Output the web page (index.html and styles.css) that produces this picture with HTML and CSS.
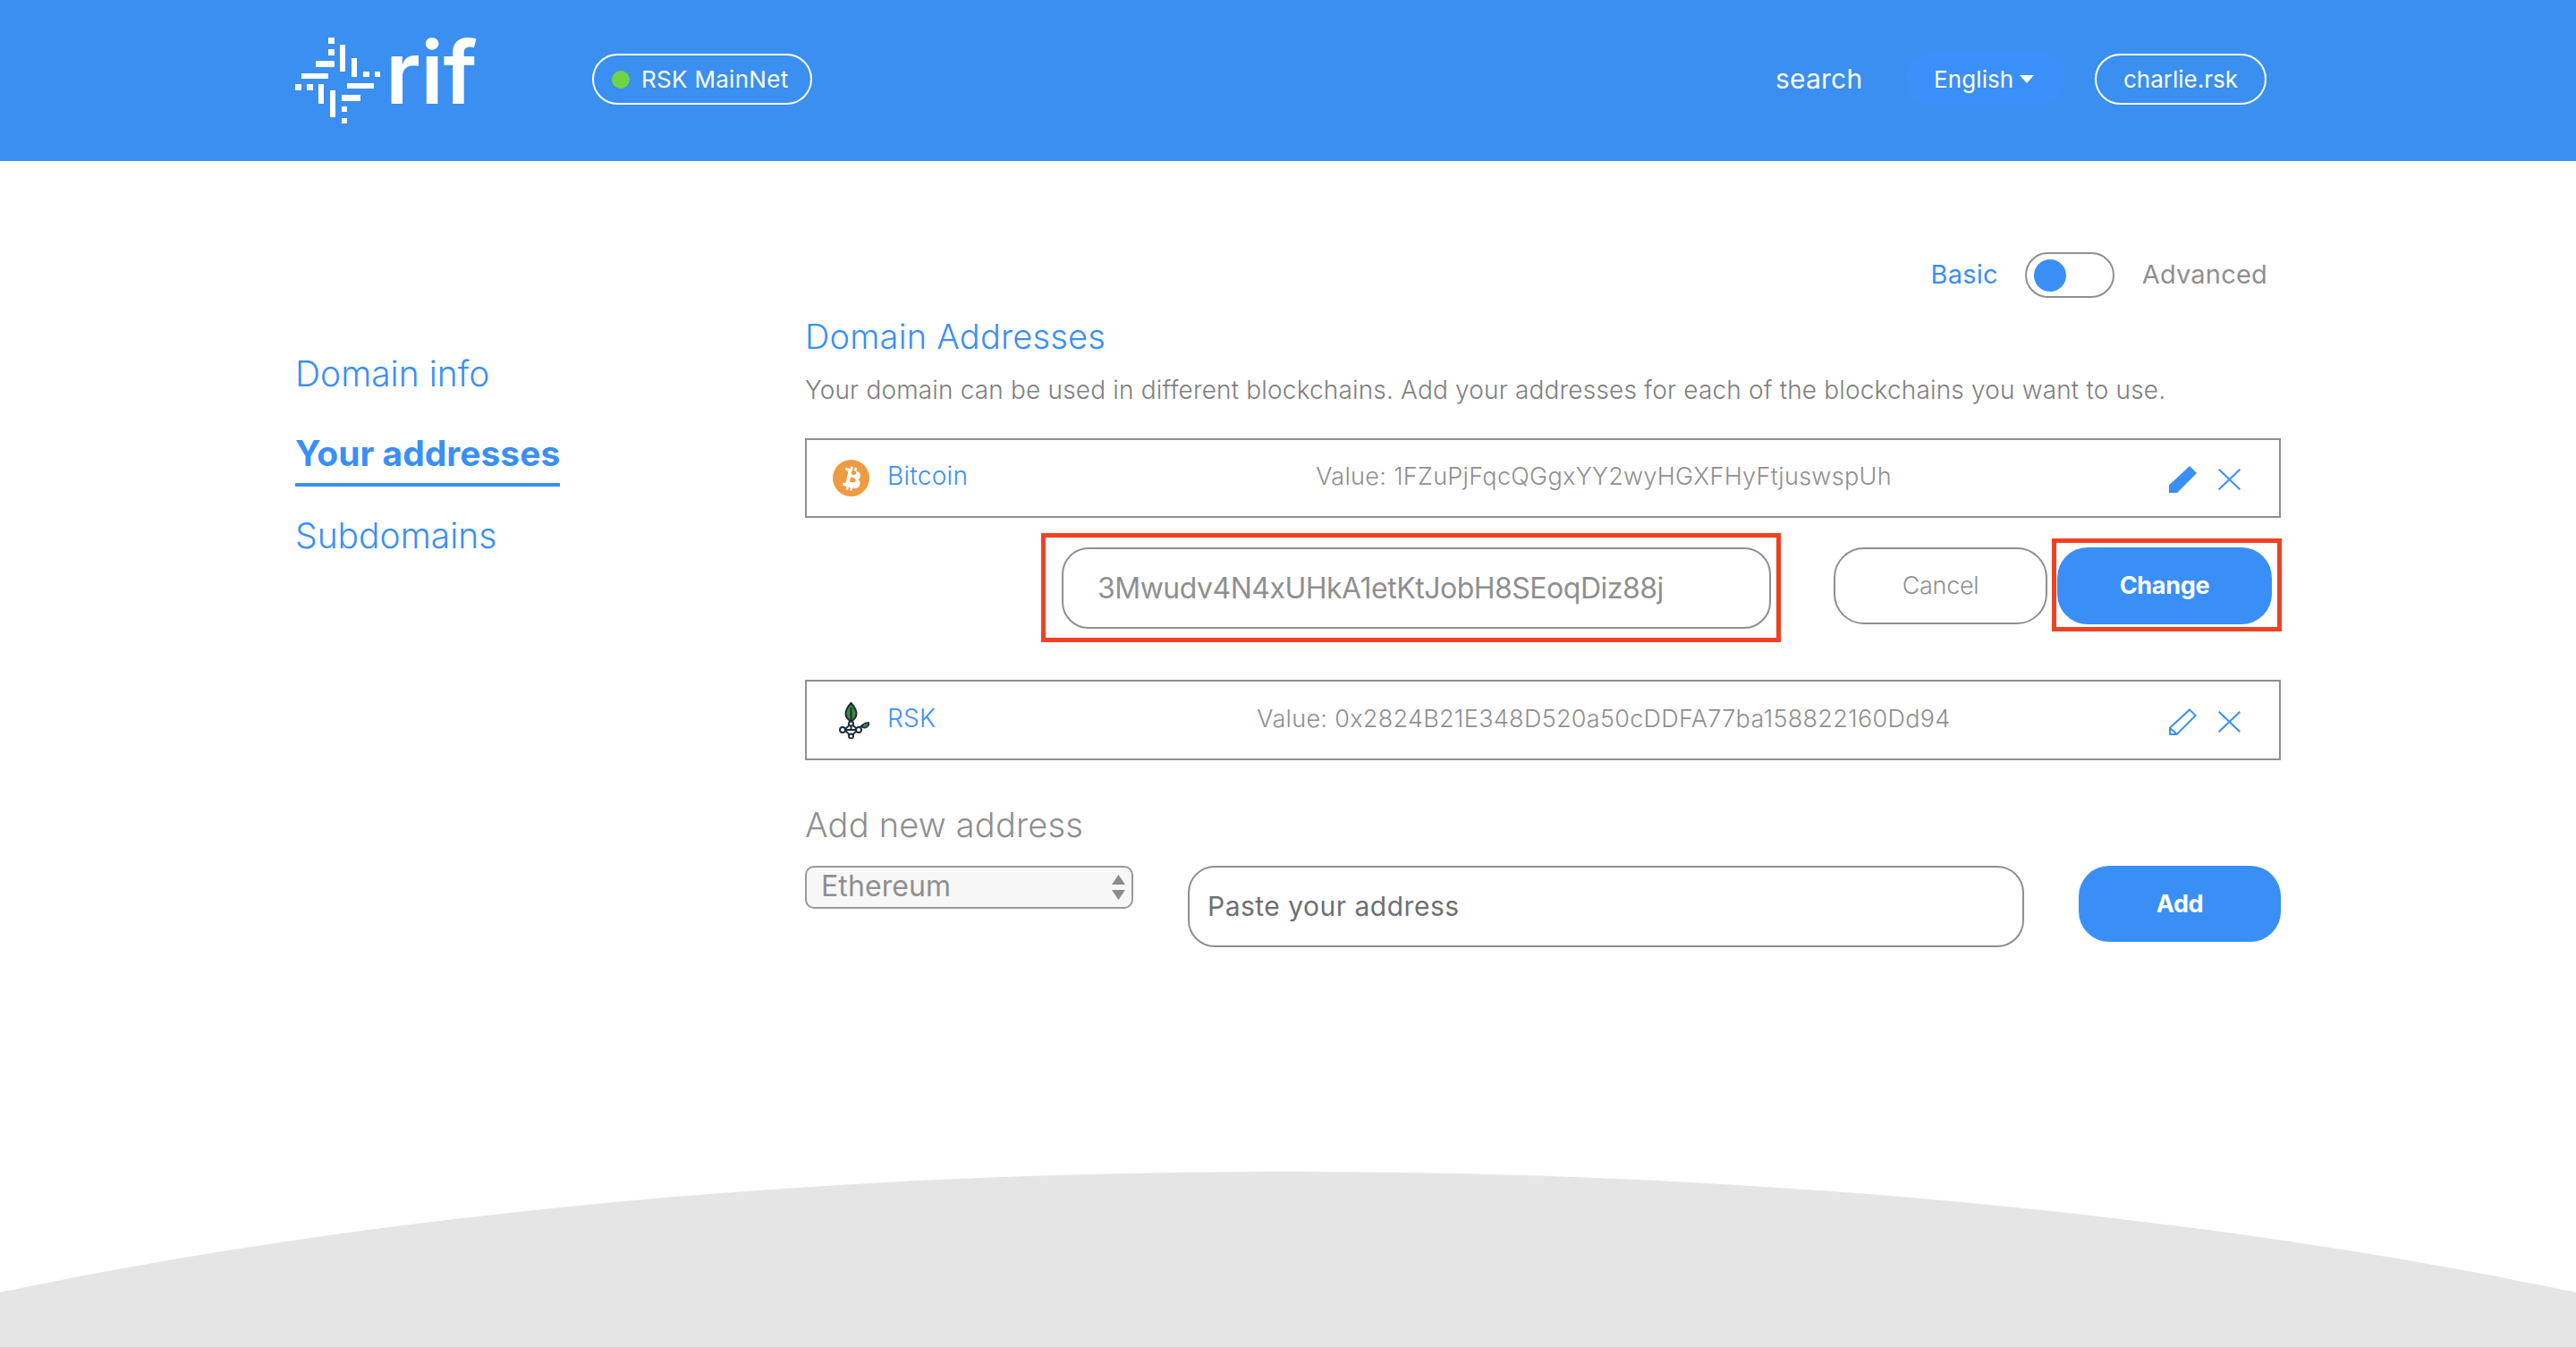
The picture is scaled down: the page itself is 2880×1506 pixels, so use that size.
FILE: index.html
```html
<!DOCTYPE html>
<html lang="en">
<head>
<meta charset="utf-8">
<title>RIF Name Service</title>
<link rel="stylesheet" href="styles.css">
</head>
<body>
<header class="topbar">
  <div class="brand">
    <svg class="logo" viewBox="330 15 210 125" width="210" height="125" aria-label="rif">
      <g fill="#fff">
        <rect x="367" y="42" width="7" height="7"/><rect x="367" y="55" width="7" height="7"/>
        <rect x="380" y="50" width="6" height="30"/><rect x="353" y="68" width="21" height="7"/>
        <rect x="393" y="65" width="6" height="21"/><rect x="406" y="80" width="7" height="6"/>
        <rect x="419" y="80" width="6" height="6"/><rect x="337" y="82" width="30" height="6"/>
        <rect x="330" y="94" width="7" height="7"/><rect x="343" y="94" width="7" height="7"/>
        <rect x="356" y="94" width="6" height="22"/><rect x="388" y="93" width="30" height="6"/>
        <rect x="369" y="101" width="6" height="30"/><rect x="382" y="106" width="21" height="7"/>
        <rect x="382" y="119" width="6" height="6"/><rect x="382" y="132" width="6" height="6"/>
        <text class="logo-word" x="431" y="116">rif</text>
      </g>
    </svg>
    <div class="pill network"><span class="dot"></span>RSK MainNet</div>
  </div>
  <nav class="topnav">
    <span class="search">search</span>
    <span class="lang">English<span class="caret"></span></span>
    <span class="pill user">charlie.rsk</span>
  </nav>
</header>

<div class="page">
  <aside class="side">
    <a class="side-link">Domain info</a>
    <a class="side-link active">Your addresses</a>
    <a class="side-link">Subdomains</a>
  </aside>
  <main class="content">
    <div class="mode">
      <span class="mode-on">Basic</span>
      <span class="switch"><span class="knob"></span></span>
      <span class="mode-off">Advanced</span>
    </div>
    <h1 class="title">Domain Addresses</h1>
    <p class="desc">Your domain can be used in different blockchains. Add your addresses for each of the blockchains you want to use.</p>

    <div class="row row-btc">
      <div class="row-name">
        <svg class="coin" viewBox="0 0 41 41" width="41" height="41">
          <circle cx="20.5" cy="20.5" r="20.5" fill="#ef9b41"/>
          <path fill="#fff" fill-rule="evenodd" d="M19 7.5l2.6.6-.8 3.2c.7.1 1.3.3 2 .5l.8-3.2 2.6.6-.8 3.3c3.2 1.1 5.5 2.8 5 5.9-.3 2.2-1.5 3.3-3.1 3.7 2.3 1.2 3.4 3 2.3 6.1-1.4 3.9-4.6 4.2-8.9 3.4l-.8 3.3-2.6-.6.8-3.3-2-.5-.8 3.3-2.6-.6.8-3.3-5.2-1.3 1.3-3c1.6.4 2.6.8 3-.2l2.9-11.5c.1-.9-.3-1.4-1.400-1.700l-2.300-.600.700-2.800 5.200 1.300zm-.5 11.700l-1.300 5.200c1.600.400 6.600 2 7.300-1 .800-3.100-4.400-3.800-6-4.200zm1.900-7.600l-1.200 4.700c1.300.300 5.400 1.700 6.100-1 .700-2.800-3.500-3.400-4.900-3.700z" transform="translate(3 0) scale(.92 1)"/>
        </svg>
        <span class="coin-name">Bitcoin</span>
      </div>
      <div class="row-value">Value: 1FZuPjFqcQGgxYY2wyHGXFHyFtjuswspUh</div>
      <div class="row-actions">
        <svg class="edit" viewBox="0 0 31 30" width="31" height="30"><path fill="#3a8ff7" d="M23 0l8 8L9 30H0v-8.500z"/></svg>
        <svg class="close" viewBox="0 0 25 24" width="25" height="24"><path fill="none" stroke="#3a8ff7" stroke-width="2" d="M.7.7l23.600 22.600M24.300.7L.7 23.300"/></svg>
      </div>
    </div>

    <div class="edit-line">
      <div class="mark mark-input"><div class="field field-edit">3Mwudv4N4xUHkA1etKtJobH8SEoqDiz88j</div></div>
      <button class="btn btn-ghost">Cancel</button>
      <div class="mark mark-btn"><button class="btn btn-primary">Change</button></div>
    </div>

    <div class="row row-rsk">
      <div class="row-name">
        <svg class="coin" viewBox="0 0 41 41" width="41" height="41">
          <path fill="#3f8a3a" stroke="#1d2b3a" stroke-width="2" d="M20.500 1c4 4.500 6 8.500 6 12s-2.500 6.500-6 9c-3.500-2.500-6-5.500-6-9s2-7.500 6-12z"/>
          <path fill="none" stroke="#1d2b3a" stroke-width="2" d="M20.500 6v26M20.500 22v3M13 31l7.500-7 7.500 7-7.500 7zM9 31h23M28 30c2-2 5-3 6-5"/>
          <circle cx="20.500" cy="24" r="2.500" fill="#fff" stroke="#1d2b3a" stroke-width="2"/>
          <circle cx="11" cy="31" r="3" fill="#fff" stroke="#1d2b3a" stroke-width="2"/>
          <circle cx="29" cy="31" r="3" fill="#fff" stroke="#1d2b3a" stroke-width="2"/>
          <circle cx="20.500" cy="38" r="2.500" fill="#fff" stroke="#1d2b3a" stroke-width="2"/>
          <path fill="#3f8a3a" stroke="#1d2b3a" stroke-width="1.500" d="M33 28c0-3 3-5 7.500-5 0 4-3 7-7.500 5z"/>
        </svg>
        <span class="coin-name">RSK</span>
      </div>
      <div class="row-value">Value: 0x2824B21E348D520a50cDDFA77ba158822160Dd94</div>
      <div class="row-actions">
        <svg class="edit" viewBox="0 0 31 30" width="31" height="30"><path fill="none" stroke="#3a8ff7" stroke-width="2" d="M23 1.400L29.600 8 8.600 29H1v-7.200zM1 22l8 7"/></svg>
        <svg class="close" viewBox="0 0 25 24" width="25" height="24"><path fill="none" stroke="#3a8ff7" stroke-width="2" d="M.7.7l23.600 22.600M24.300.7L.7 23.300"/></svg>
      </div>
    </div>

    <h2 class="title title-add">Add new address</h2>
    <div class="add-line">
      <div class="select"><span class="select-text">Ethereum</span>
        <svg class="select-arrows" viewBox="0 0 15 28" width="15" height="28"><path fill="#8c8c8c" d="M7.500 0L15 11H0zM0 17h15L7.500 28z"/></svg>
      </div>
      <div class="field field-add">Paste your address</div>
      <button class="btn btn-primary btn-add">Add</button>
    </div>
  </main>
</div>

<footer class="foot">
  <svg class="foot-arc" viewBox="0 0 2880 196" width="2880" height="196"><ellipse cx="1440" cy="675" rx="2400" ry="675" fill="#e5e5e5"/></svg>
</footer>
</body>
</html>
```

FILE: styles.css
```css
* { box-sizing: border-box; }
html, body { margin: 0; height: 100%; }
body {
  width: 2880px;
  height: 1506px;
  overflow: hidden;
  position: relative;
  background: #fff;
  font-family: Inter, "Liberation Sans", sans-serif;
  color: #8f8f8f;
  display: flex;
  flex-direction: column;
}

.topbar {
  height: 180px;
  flex: none;
  background: #3a8ff0;
  padding: 0 346px 0 330px;
  display: flex;
  align-items: flex-start;
  justify-content: space-between;
  color: #fff;
}
.brand { display: flex; align-items: flex-start; padding-top: 15px; }
.logo { display: block; }
.logo-word { font: 600 98px Inter, sans-serif; letter-spacing: -0.500px; }
.pill {
  height: 57px;
  border: 2px solid #fff;
  border-radius: 29px;
  display: flex;
  align-items: center;
  font-size: 26px;
  font-weight: 400;
}
.network {
  margin: 45px 0 0 122px;
  width: 246px;
  padding-left: 20px;
  letter-spacing: 0.300px;
}
.dot {
  width: 20px;
  height: 20px;
  border-radius: 50%;
  background: #70d443;
  margin-right: 13px;
}
.topnav { display: flex; align-items: center; padding-top: 58px; font-weight: 300; }
.search { font-size: 30px; width: 145px; letter-spacing: 0.200px; font-weight: 400; }
.lang {
  width: 180px;
  height: 60px;
  border-radius: 30px;
  background: #3a8ff8;
  font-size: 26px;
  font-weight: 400;
  display: flex;
  align-items: center;
  padding-left: 32px;
  margin-right: 32px;
  letter-spacing: 0.100px;
}
.caret {
  width: 0;
  height: 0;
  margin-left: 7px;
  border-left: 8px solid transparent;
  border-right: 8px solid transparent;
  border-top: 9px solid #fff;
}
.user {
  width: 192px;
  justify-content: center;
  letter-spacing: 0;
}

.page {
  flex: 1;
  display: flex;
  padding-left: 330px;
}
.side {
  width: 570px;
  flex: none;
  padding-top: 214px;
  display: flex;
  flex-direction: column;
  align-items: flex-start;
  color: #3a8ff7;
}
.side-link {
  font-size: 39px;
  font-weight: 300;
  line-height: 47px;
  margin-bottom: 42px;
}
.side-link.active {
  font-weight: 700;
  border-bottom: 4px solid #3a8ff7;
  padding-bottom: 10px;
  margin-bottom: 31px;
}

.content { width: 1650px; flex: none; }
.mode {
  display: flex;
  align-items: center;
  justify-content: flex-end;
  padding: 99px 15px 0 0;
  font-size: 29px;
  letter-spacing: 0.200px;
  height: 153px;
}
.mode-on { color: #3a8ff7; }
.switch {
  width: 100px;
  height: 51px;
  margin: 3px 31px 0 30px;
  border: 2px solid #8f8f8f;
  border-radius: 26px;
  padding: 6px 0 0 8px;
}
.knob { display: block; width: 36px; height: 36px; border-radius: 50%; background: #3a8ff7; }
.title {
  margin: 20px 0 0;
  font-size: 38px;
  line-height: 46px;
  font-weight: 300;
  color: #3a8ff7;
  letter-spacing: 0.200px;
}
.desc {
  margin: 20px 0 0;
  font-size: 28px;
  line-height: 34px;
  font-weight: 300;
  color: #7f7f7f;
  letter-spacing: 0.170px;
}

.row {
  height: 90px;
  border: 2px solid #8f8f8f;
  display: flex;
  align-items: center;
  font-size: 27px;
  font-weight: 300;
  letter-spacing: 0.300px;
}
.row-btc { margin-top: 37px; height: 89px; }
.row-rsk { margin-top: 42px; }
.row-name { width: 259px; flex: none; display: flex; align-items: center; padding-left: 29px; }
.coin { flex: none; margin-right: 20px; }
.coin-name { color: #3a8ff7; font-size: 28px; padding-bottom: 5px; }
.row-value { flex: 1; text-align: center; padding-bottom: 4px; }
.row-actions {
  width: 123px;
  flex: none;
  display: flex;
  align-items: center;
  gap: 24px;
  padding-top: 3px;
}
.edit, .close { display: block; flex: none; }

.edit-line {
  margin-top: 17px;
  padding-left: 264px;
  display: flex;
  align-items: flex-start;
  width: 1651px;
}
.mark { border: 5px solid #ef4123; }
.mark-input { width: 827px; height: 122px; padding: 11px 6px 0 18px; margin-right: 59px; }
.mark-btn { width: 257px; height: 104px; padding: 5px 0 0 1px; margin: 6px 0 0 5px; }
.field { border: 2px solid #8f8f8f; display: flex; align-items: center; }
.field-edit {
  height: 91px;
  border-radius: 30px;
  padding: 0 0 1px 38px;
  font-size: 32px;
  font-weight: 400;
  letter-spacing: -0.500px;
}
.btn {
  display: block;
  height: 86px;
  border-radius: 34px;
  font-family: inherit;
  font-size: 27px;
  padding: 0 0 1px;
  cursor: pointer;
}
.btn-ghost {
  width: 239px;
  margin-top: 16px;
  background: #fff;
  border: 2px solid #8f8f8f;
  color: #8f8f8f;
  font-weight: 300;
  letter-spacing: -0.300px;
}
.btn-primary {
  width: 240px;
  background: #3a8ff7;
  border: 0;
  color: #fff;
  font-weight: 700;
  letter-spacing: -0.300px;
}

.title-add { margin-top: 49px; color: #8f8f8f; }
.add-line { display: flex; align-items: flex-start; margin-top: 23px; }
.select {
  width: 367px;
  height: 48px;
  border: 2px solid #999;
  border-radius: 10px;
  background: #f7f7f7;
  font-size: 32px;
  font-weight: 400;
  padding-left: 16px;
  margin-right: 61px;
  display: flex;
  align-items: center;
  justify-content: space-between;
  padding-right: 7px;
  letter-spacing: 0.100px;
}
.select-text { padding-bottom: 3px; }
.select-arrows { display: block; flex: none; }
.field-add {
  width: 935px;
  height: 91px;
  border-radius: 30px;
  padding: 0 0 2px 20px;
  font-size: 30px;
  letter-spacing: 0.500px;
  color: #6f6f6f;
  margin-right: 61px;
}
.btn-add { width: 226px; height: 85px; }

.foot { position: absolute; left: 0; bottom: 0; width: 2880px; height: 196px; }
.foot-arc { display: block; }
```
